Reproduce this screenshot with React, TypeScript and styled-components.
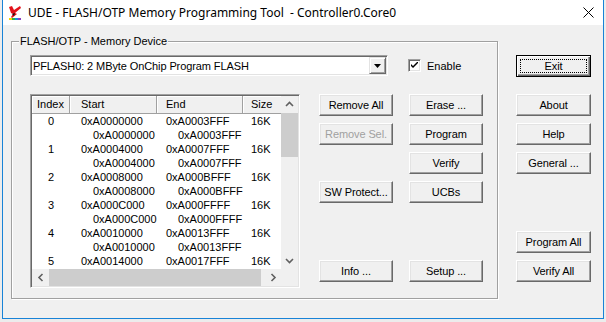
import React from "react";
import styled, { createGlobalStyle } from "styled-components";

const UI_FONT = `"Liberation Sans", Arial, sans-serif`;

const Global = createGlobalStyle`
  html, body { margin: 0; padding: 0; background: #ececec; }
  body { width: 606px; height: 322px; overflow: hidden; }
  #root { width: 606px; height: 322px; }
`;

const Window = styled.div`
  box-sizing: border-box;
  margin-left: 2px;
  width: 602px;
  height: 319px;
  border: 1px solid #1883d7;
  border-top: none;
  background: #f0f0f0;
  display: flex;
  flex-direction: column;
  font-family: ${UI_FONT};
  font-size: 11px;
  color: #000;
`;

const TitleBar = styled.div`
  height: 25px;
  flex-shrink: 0;
  background: #fff;
  display: flex;
  align-items: center;
  padding-left: 5px;
`;

const TitleText = styled.div`
  flex: 1;
  margin-left: 6px;
  font-family: "Noto Sans", sans-serif;
  font-size: 12px;
  white-space: pre;
  color: #000;
`;

const CloseBox = styled.div`
  width: 30px;
  height: 25px;
  display: flex;
  align-items: center;
  justify-content: center;
`;

const Body = styled.div`
  display: flex;
  align-items: flex-start;
  padding: 16px 0 0 8px;
`;

const GroupBox = styled.div`
  position: relative;
  box-sizing: border-box;
  width: 487px;
  height: 258px;
  border: 1px solid #a0a0a0;
  box-shadow: inset 1px 1px 0 #fff, 1px 1px 0 #fff;
  padding: 13px 0 0 18px;
`;

const Legend = styled.span`
  position: absolute;
  top: -8px;
  left: 7px;
  padding: 0 1px;
  line-height: 14px;
  background: #f0f0f0;
`;

const DeviceRow = styled.div`
  display: flex;
  align-items: center;
`;

const Combo = styled.div`
  box-sizing: border-box;
  width: 358px;
  height: 21px;
  display: flex;
  align-items: center;
  background: #fff;
  border: 1px solid;
  border-color: #a0a0a0 #fff #fff #a0a0a0;
  box-shadow: inset 1px 1px 0 #696969, inset -1px -1px 0 #e3e3e3;
  padding: 1px 1px 1px 2px;
`;

const ComboText = styled.span`
  flex: 1;
  white-space: nowrap;
  letter-spacing: -0.1px;
`;

const DropButton = styled.div`
  box-sizing: border-box;
  width: 17px;
  height: 17px;
  display: flex;
  align-items: center;
  justify-content: center;
  background: #f0f0f0;
  border: 1px solid;
  border-color: #e3e3e3 #696969 #696969 #e3e3e3;
  box-shadow: inset 1px 1px 0 #fff, inset -1px -1px 0 #a0a0a0;
`;

const CheckLabel = styled.label`
  display: flex;
  align-items: center;
  margin-left: 20px;
  gap: 6px;
`;

const CheckBox = styled.span`
  box-sizing: border-box;
  width: 13px;
  height: 13px;
  display: flex;
  align-items: center;
  justify-content: center;
  background: #fff;
  border: 1px solid;
  border-color: #a0a0a0 #fff #fff #a0a0a0;
  box-shadow: inset 1px 1px 0 #696969, inset -1px -1px 0 #e3e3e3;
`;

const MainRow = styled.div`
  display: flex;
  align-items: flex-start;
  margin-top: 18px;
  gap: 19px;
`;

const ListView = styled.div`
  box-sizing: border-box;
  width: 270px;
  height: 194px;
  border: 1px solid;
  border-color: #a0a0a0 #fff #fff #a0a0a0;
  box-shadow: inset 1px 1px 0 #696969, inset -1px -1px 0 #e3e3e3;
  padding: 1px;
  display: grid;
  grid-template-columns: 1fr 17px;
  grid-template-rows: 1fr 17px;
`;

const ListContent = styled.div`
  background: #fff;
  overflow: hidden;
  display: flex;
  flex-direction: column;
`;

const COLS = "38px 87px 86px 60px";

const HeaderRow = styled.div`
  display: grid;
  grid-template-columns: ${COLS};
  height: 18px;
  flex-shrink: 0;
  background: #f0f0f0;
`;

const HeaderCell = styled.div<{ $pad: number; $center?: boolean }>`
  box-sizing: border-box;
  height: 18px;
  line-height: 17px;
  border-right: 1px solid #a0a0a0;
  border-bottom: 1px solid #a0a0a0;
  box-shadow: inset 1px 1px 0 #fff;
  padding-left: ${(p) => p.$pad}px;
  text-align: ${(p) => (p.$center ? "center" : "left")};
  white-space: nowrap;
`;

const Item = styled.div`
  display: grid;
  grid-template-columns: ${COLS};
  line-height: 14px;
  flex-shrink: 0;
`;

const Cell = styled.div<{ $pad: number; $center?: boolean }>`
  padding-left: ${(p) => p.$pad}px;
  text-align: ${(p) => (p.$center ? "center" : "left")};
  white-space: nowrap;
`;

const CellLine = styled.div<{ $indent: number }>`
  padding-left: ${(p) => p.$indent}px;
`;

const VScroll = styled.div`
  background: #f0f0f0;
  display: flex;
  flex-direction: column;
`;

const HScroll = styled.div`
  background: #f0f0f0;
  display: flex;
  align-items: stretch;
`;

const ScrollArrow = styled.div`
  width: 17px;
  height: 17px;
  flex-shrink: 0;
  display: flex;
  align-items: center;
  justify-content: center;
`;

const VThumb = styled.div`
  height: 44px;
  background: #cdcdcd;
`;

const Track = styled.div`
  flex: 1;
`;

const HThumb = styled.div`
  width: 212px;
  background: #cdcdcd;
`;

const Corner = styled.div`
  background: #f0f0f0;
`;

const ActionArea = styled.div`
  display: flex;
  flex-direction: column;
`;

const ButtonGrid = styled.div`
  display: grid;
  grid-template-columns: 74px 74px;
  grid-auto-rows: 22px;
  column-gap: 16px;
  row-gap: 7px;
`;

const BottomButtons = styled.div`
  display: flex;
  gap: 16px;
  margin-top: 57px;
`;

const Button = styled.button<{ $w?: number; $default?: boolean }>`
  position: relative;
  box-sizing: border-box;
  width: ${(p) => p.$w ?? 74}px;
  height: 22px;
  padding: 0;
  margin: 0;
  font-family: ${UI_FONT};
  font-size: 11px;
  letter-spacing: -0.1px;
  color: #000;
  background: #f0f0f0;
  border: 1px solid;
  border-color: ${(p) => (p.$default ? "#000" : "#fff #696969 #696969 #fff")};
  box-shadow: ${(p) =>
    p.$default
      ? "inset 1px 1px 0 #fff, inset -1px -1px 0 #696969, inset -2px -2px 0 #a0a0a0"
      : "inset -1px -1px 0 #a0a0a0, inset 1px 1px 0 #e3e3e3"};
  &:disabled {
    color: #a0a0a0;
  }
  &::after {
    content: "";
    display: ${(p) => (p.$default ? "block" : "none")};
    position: absolute;
    inset: 3px;
    border: 1px dotted #000;
  }
`;

const RightColumn = styled.div`
  display: flex;
  flex-direction: column;
  margin: 14px 0 0 18px;
`;

const Stack = styled.div<{ $mt: number }>`
  display: flex;
  flex-direction: column;
  gap: 7px;
  margin-top: ${(p) => p.$mt}px;
`;

const hex = (n: number) => "0x" + n.toString(16).toUpperCase().padStart(8, "0");

const ITEM_COUNT = 6;
const items = Array.from({ length: ITEM_COUNT }, (_, i) => {
  const start = 0xa0000000 + i * 0x4000;
  return { index: i, start: hex(start), end: hex(start + 0x3fff), size: "16K" };
});

const AppIcon = () => (
  <svg width="14" height="16" viewBox="0 0 14 16">
    <path d="M1 2 L4 1 L6 5 L12 1 L13 3 L7 8 L9 9 L4 13 L3 12 L5 9 L3 8 Z" fill="#e3131b" />
    <path d="M4 9 L7 8 L6 11 Z" fill="#111" />
    <rect x="1" y="13" width="3" height="2" fill="#f2d600" />
    <rect x="4" y="13" width="3" height="2" fill="#2fb34a" />
    <rect x="7" y="13" width="3" height="2" fill="#1c8fe0" />
    <rect x="10" y="13" width="3" height="2" fill="#8a3fc0" />
  </svg>
);

const CloseIcon = () => (
  <svg width="11" height="11" viewBox="0 0 11 11">
    <path d="M0.5 0.5 L10.5 10.5 M10.5 0.5 L0.5 10.5" stroke="#000" strokeWidth="1" />
  </svg>
);

const Chevron = ({ dir }: { dir: "up" | "down" | "left" | "right" }) => {
  const d = {
    up: "M1 5 L4.5 1.5 L8 5",
    down: "M1 2 L4.5 5.5 L8 2",
    left: "M5.5 1 L2 4.5 L5.5 8",
    right: "M2.5 1 L6 4.5 L2.5 8",
  }[dir];
  const vertical = dir === "up" || dir === "down";
  return (
    <svg width={vertical ? 9 : 8} height={vertical ? 7 : 9} viewBox={vertical ? "0 0 9 7" : "0 0 8 9"}>
      <path d={d} fill="none" stroke="#606060" strokeWidth="1.6" />
    </svg>
  );
};

export default function App() {
  return (
    <>
      <Global />
      <Window>
        <TitleBar>
          <AppIcon />
          <TitleText>UDE - FLASH/OTP Memory Programming Tool  - Controller0.Core0</TitleText>
          <CloseBox>
            <CloseIcon />
          </CloseBox>
        </TitleBar>
        <Body>
          <GroupBox>
            <Legend>FLASH/OTP - Memory Device</Legend>
            <DeviceRow>
              <Combo>
                <ComboText>PFLASH0: 2 MByte OnChip Program FLASH</ComboText>
                <DropButton>
                  <svg width="7" height="4" viewBox="0 0 7 4">
                    <path d="M0 0 H7 L3.5 4 Z" fill="#000" />
                  </svg>
                </DropButton>
              </Combo>
              <CheckLabel>
                <CheckBox>
                  <svg width="7" height="7" viewBox="0 0 7 7">
                    <path d="M0 2 L0 4 L2 6 L7 1 L7 -1 L2 4 Z" fill="#000" />
                  </svg>
                </CheckBox>
                Enable
              </CheckLabel>
            </DeviceRow>
            <MainRow>
              <ListView>
                <ListContent>
                  <HeaderRow>
                    <HeaderCell $pad={0} $center>Index</HeaderCell>
                    <HeaderCell $pad={11}>Start</HeaderCell>
                    <HeaderCell $pad={9}>End</HeaderCell>
                    <HeaderCell $pad={8}>Size</HeaderCell>
                  </HeaderRow>
                  {items.map((it) => {
                    const visibleSub = it.index < ITEM_COUNT - 1;
                    return (
                      <Item key={it.index}>
                        <Cell $pad={0} $center>{it.index}</Cell>
                        <Cell $pad={11}>
                          <CellLine $indent={0}>{it.start}</CellLine>
                          {visibleSub && <CellLine $indent={12}>{it.start}</CellLine>}
                        </Cell>
                        <Cell $pad={9}>
                          <CellLine $indent={0}>{it.end}</CellLine>
                          {visibleSub && <CellLine $indent={12}>{it.end}</CellLine>}
                        </Cell>
                        <Cell $pad={8}>{it.size}</Cell>
                      </Item>
                    );
                  })}
                </ListContent>
                <VScroll>
                  <ScrollArrow>
                    <Chevron dir="up" />
                  </ScrollArrow>
                  <VThumb />
                  <Track />
                  <ScrollArrow>
                    <Chevron dir="down" />
                  </ScrollArrow>
                </VScroll>
                <HScroll>
                  <ScrollArrow>
                    <Chevron dir="left" />
                  </ScrollArrow>
                  <HThumb />
                  <Track />
                  <ScrollArrow>
                    <Chevron dir="right" />
                  </ScrollArrow>
                </HScroll>
                <Corner />
              </ListView>
              <ActionArea>
                <ButtonGrid>
                  <Button>Remove All</Button>
                  <Button>Erase ...</Button>
                  <Button disabled>Remove Sel.</Button>
                  <Button>Program</Button>
                  <div />
                  <Button>Verify</Button>
                  <Button>SW Protect...</Button>
                  <Button>UCBs</Button>
                </ButtonGrid>
                <BottomButtons>
                  <Button>Info ...</Button>
                  <Button>Setup ...</Button>
                </BottomButtons>
              </ActionArea>
            </MainRow>
          </GroupBox>
          <RightColumn>
            <Button $w={75} $default>Exit</Button>
            <Stack $mt={17}>
              <Button $w={75}>About</Button>
              <Button $w={75}>Help</Button>
              <Button $w={75}>General ...</Button>
            </Stack>
            <Stack $mt={57}>
              <Button $w={75}>Program All</Button>
              <Button $w={75}>Verify All</Button>
            </Stack>
          </RightColumn>
        </Body>
      </Window>
    </>
  );
}
